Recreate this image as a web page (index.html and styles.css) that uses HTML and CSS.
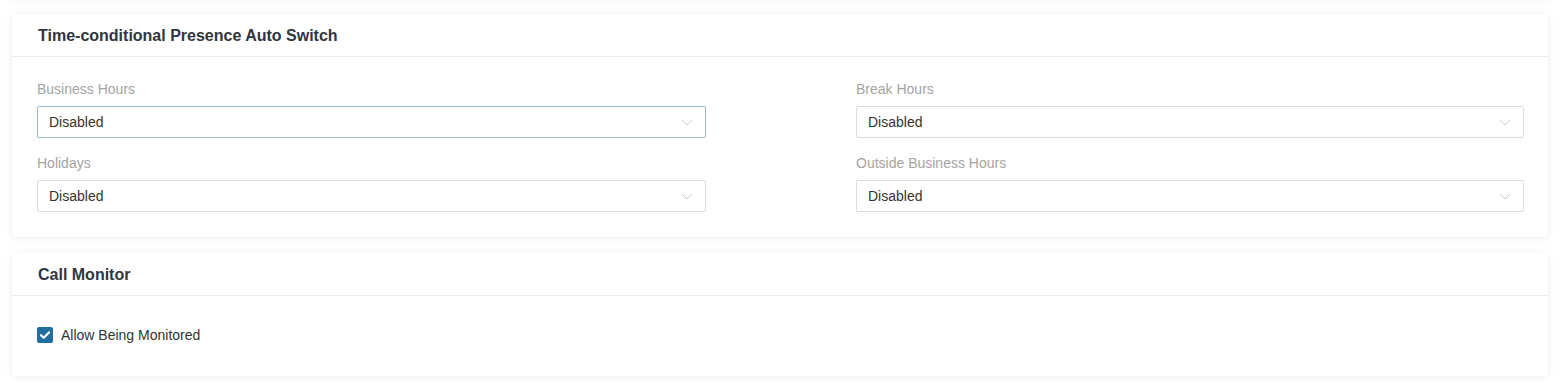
FILE: index.html
```html
<!DOCTYPE html>
<html lang="en">
<head>
    <meta charset="UTF-8">
    <meta name="viewport" content="width=device-width, initial-scale=1.0">
    <title>Presence Settings</title>
    <link rel="stylesheet" href="styles.css">
</head>
<body>
    <div class="page">
        <div class="card card-stub"></div>

        <div class="card">
            <div class="card-header">Time-conditional Presence Auto Switch</div>
            <div class="card-body">
                <div class="form-grid">
                    <div class="field">
                        <label class="field-label">Business Hours</label>
                        <div class="select focused">
                            <span>Disabled</span>
                            <svg class="chevron" viewBox="0 0 12 7" width="12" height="7"><path d="M1 1l5 5 5-5" fill="none" stroke="#c9c9c9" stroke-width="1"/></svg>
                        </div>
                    </div>
                    <div class="field">
                        <label class="field-label">Break Hours</label>
                        <div class="select">
                            <span>Disabled</span>
                            <svg class="chevron" viewBox="0 0 12 7" width="12" height="7"><path d="M1 1l5 5 5-5" fill="none" stroke="#c9c9c9" stroke-width="1"/></svg>
                        </div>
                    </div>
                    <div class="field">
                        <label class="field-label">Holidays</label>
                        <div class="select">
                            <span>Disabled</span>
                            <svg class="chevron" viewBox="0 0 12 7" width="12" height="7"><path d="M1 1l5 5 5-5" fill="none" stroke="#c9c9c9" stroke-width="1"/></svg>
                        </div>
                    </div>
                    <div class="field">
                        <label class="field-label">Outside Business Hours</label>
                        <div class="select">
                            <span>Disabled</span>
                            <svg class="chevron" viewBox="0 0 12 7" width="12" height="7"><path d="M1 1l5 5 5-5" fill="none" stroke="#c9c9c9" stroke-width="1"/></svg>
                        </div>
                    </div>
                </div>
            </div>
        </div>

        <div class="card">
            <div class="card-header">Call Monitor</div>
            <div class="card-body monitor-body">
                <label class="checkbox">
                    <span class="check-box">
                        <svg viewBox="0 0 16 16" width="16" height="16"><path d="M4 8.2l2.7 2.6L12 5.4" fill="none" stroke="#fff" stroke-width="2.2" stroke-linecap="round" stroke-linejoin="round"/></svg>
                    </span>
                    Allow Being Monitored
                </label>
            </div>
        </div>
    </div>
</body>
</html>
```

FILE: styles.css
```css
body {
    margin: 0;
    background-color: #ffffff;
    font-family: "Liberation Sans", Arial, sans-serif;
    color: #333;
    overflow: hidden;
}
.page {
    padding: 0 17px 0 12px;
    margin-top: -20px;
}
.card {
    background: white;
    border-radius: 3px;
    box-shadow: 0 1px 8px rgba(0,0,0,0.07);
    margin-bottom: 16px;
}
.card-stub {
    height: 18px;
}
.card-header {
    font-size: 16px;
    font-weight: bold;
    color: #2f3640;
    padding: 2px 26px 0 26px;
    height: 40px;
    line-height: 40px;
    border-bottom: 1px solid #ededed;
}
.card-body {
    padding: 23px 24px 25px 25px;
}
.form-grid {
    display: grid;
    grid-template-columns: 669fr 668fr;
    column-gap: 150px;
    row-gap: 16px;
}
.field-label {
    display: block;
    font-size: 14px;
    color: #a4a4a4;
    line-height: 18px;
    margin-bottom: 8px;
}
.select {
    height: 32px;
    box-sizing: border-box;
    border: 1px solid #dcdcdc;
    border-radius: 2px;
    display: flex;
    align-items: center;
    justify-content: space-between;
    padding: 0 12px 0 11px;
    font-size: 14px;
    color: #333;
}
.select.focused {
    border-color: #97b9cc;
}
.chevron {
    display: block;
}
.monitor-body {
    padding-top: 30px;
    padding-bottom: 32px;
}
.checkbox {
    display: flex;
    align-items: center;
    font-size: 14px;
    color: #333;
    line-height: 18px;
}
.check-box {
    width: 16px;
    height: 16px;
    border-radius: 2px;
    background-color: #1f6fa3;
    margin-right: 8px;
    display: block;
}
.check-box svg {
    display: block;
}
```
